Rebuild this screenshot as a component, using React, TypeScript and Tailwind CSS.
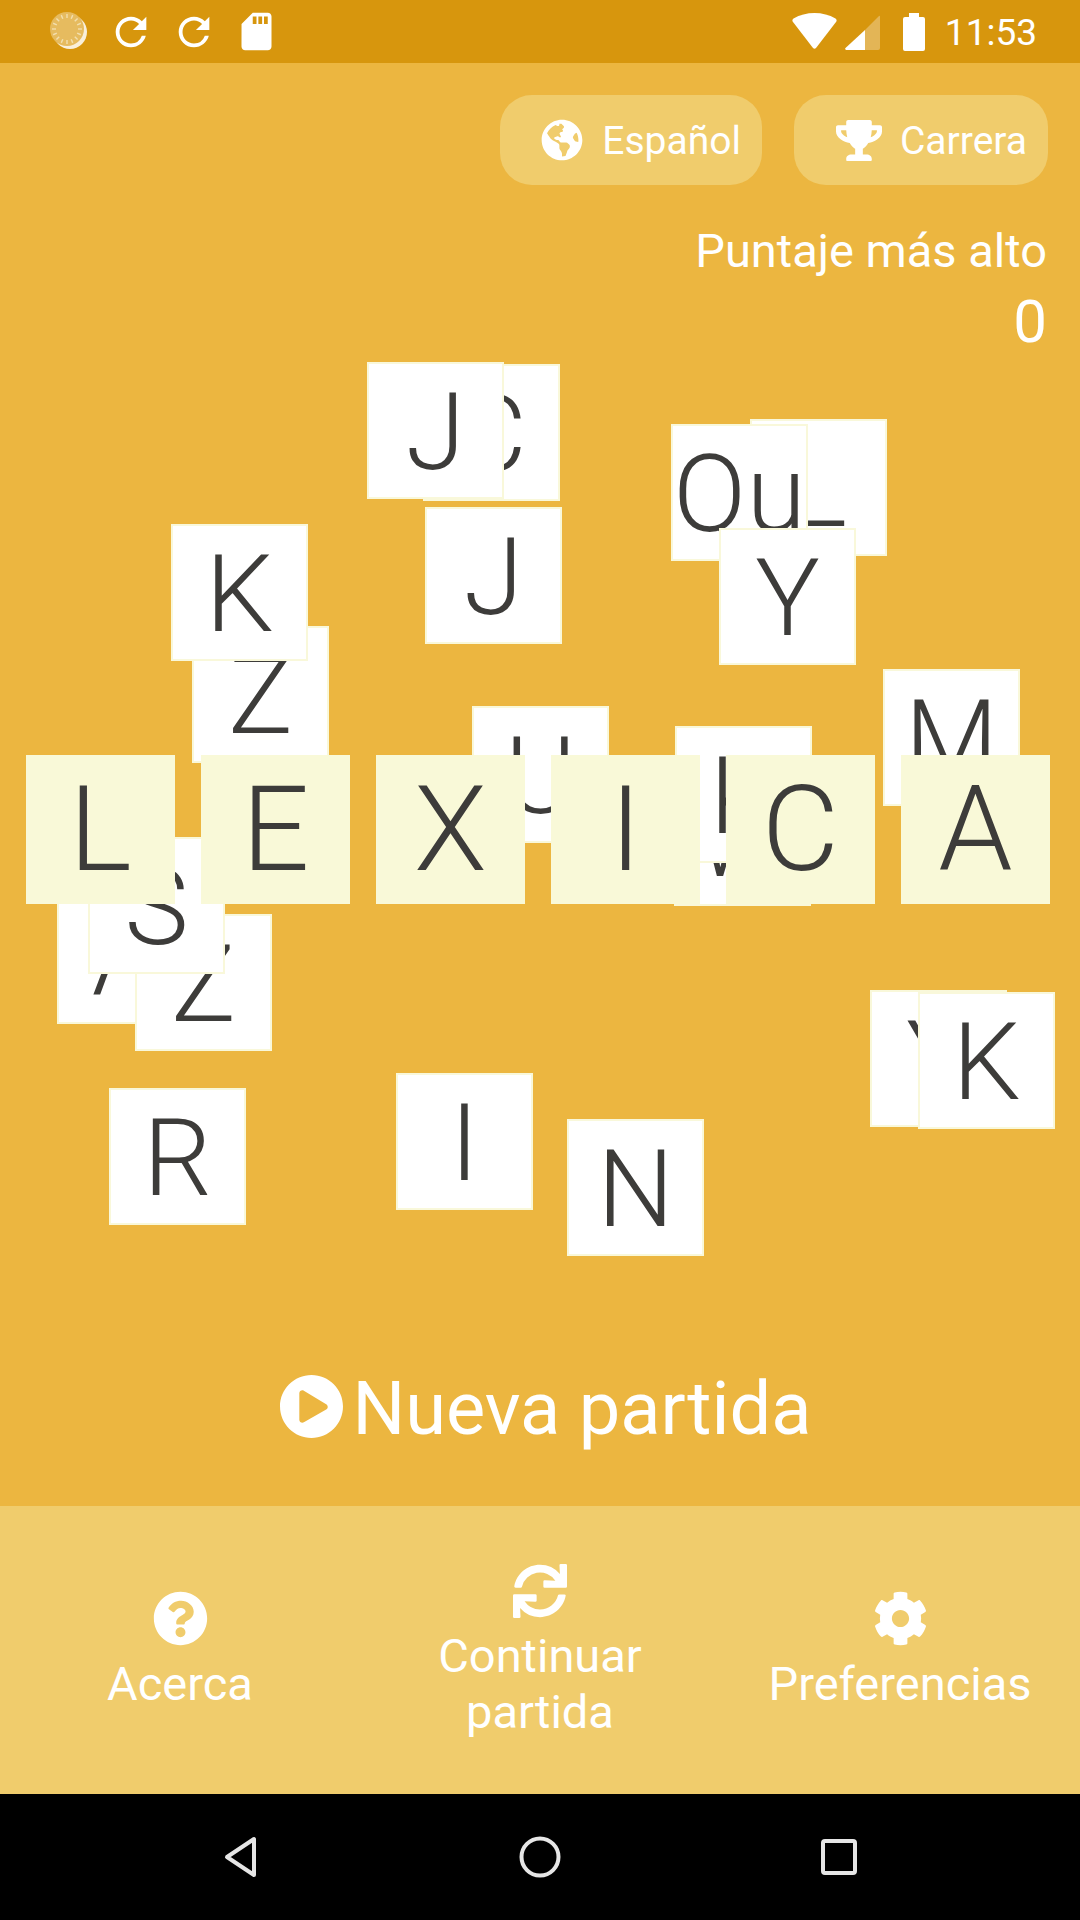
import { FaCog, FaGlobeAmericas, FaPlayCircle, FaQuestionCircle, FaSync, FaTrophy } from 'react-icons/fa';
import { MdRefresh, MdSdStorage } from 'react-icons/md';

// tiles on the board, back to front, x/y are page coordinates
const looseTiles = [
    { ch: 'C', x: 423, y: 364 },
    { ch: 'J', x: 367, y: 362 },
    { ch: 'J', x: 425, y: 507 },
    { ch: 'L', x: 750, y: 419 },
    { ch: 'Qu', x: 671, y: 424 },
    { ch: 'Y', x: 719, y: 528 },
    { ch: 'Z', x: 192, y: 626 },
    { ch: 'K', x: 171, y: 524 },
    { ch: 'U', x: 472, y: 706 },
    { ch: 'M', x: 883, y: 669 },
    { ch: 'W', x: 674, y: 769 },
    { ch: 'K', x: 675, y: 726 },
    { ch: 'A', x: 57, y: 887 },
    { ch: 'Z', x: 135, y: 914 },
    { ch: 'S', x: 88, y: 837 },
    { ch: 'R', x: 109, y: 1088 },
    { ch: 'I', x: 396, y: 1073 },
    { ch: 'N', x: 567, y: 1119 },
    { ch: 'Y', x: 870, y: 990 },
    { ch: 'K', x: 918, y: 992 },
];

const title = ['L', 'E', 'X', 'I', 'C', 'A'];

function Spinner() {
    const ticks = Array.from({ length: 16 }, (_, i) => (i * 360) / 16);
    return (
        <svg width="38" height="38" viewBox="0 0 38 38">
            <circle cx="20" cy="20" r="17" fill="#ffffff" opacity="0.85" />
            <circle cx="17" cy="17" r="17" fill="#e6bb5f" />
            {ticks.map((a) => (
                <line
                    key={a}
                    x1="17"
                    y1="2"
                    x2="17"
                    y2="6"
                    stroke="#f3dfae"
                    strokeWidth="1.4"
                    transform={`rotate(${a} 17 17)`}
                />
            ))}
        </svg>
    );
}

function StatusBar() {
    return (
        <div className="h-[63px] bg-[#d7960d] flex items-center text-white">
            <div className="ml-[50px] w-[38px] h-[38px] mt-[-1px]">
                <Spinner />
            </div>
            <MdRefresh className="ml-[20px] w-[46px] h-[46px]" />
            <MdRefresh className="ml-[17px] w-[46px] h-[46px]" />
            <MdSdStorage className="ml-[17px] w-[45px] h-[45px]" />
            <div className="ml-auto flex items-center">
                <svg width="45" height="36" viewBox="0 0 45 36" className="mt-[-1px]">
                    <path d="M21 35 L1 9 Q-0.5 7 1.5 5.5 Q11 0 22.5 0 Q34 0 43.5 5.5 Q45.5 7 44 9 L24 35 Q22.5 36.5 21 35Z" fill="#ffffff" />
                </svg>
                <svg width="35" height="35" viewBox="0 0 35 35" className="ml-[8px] mt-[1px]">
                    <path d="M20 15 L34 1 Q35 0 35 2 L35 33 Q35 35 33 35 L20 35Z" fill="#ffffff" opacity="0.3" />
                    <path d="M20 15 L20 35 L1 35 Q-0.5 34 0.5 33Z" fill="#ffffff" />
                </svg>
                <svg width="22" height="38" viewBox="0 0 22 38" className="ml-[23px]">
                    <path d="M6 0 H16 V4 H20 Q22 4 22 6 V36 Q22 38 20 38 H2 Q0 38 0 36 V6 Q0 4 2 4 H6Z" fill="#ffffff" />
                </svg>
                <span className="ml-[20px] mr-[43px] text-[37px] leading-none mt-[1px]">11:53</span>
            </div>
        </div>
    );
}

function Board() {
    return (
        <div className="relative h-[900px] overflow-visible">
            {looseTiles.map((t, i) => (
                <div
                    key={i}
                    className="absolute w-[137px] h-[137px] bg-white border-2 border-[#f9f8da] flex items-center justify-center pt-[2px] text-[108px] font-light text-[#3d3c3a]"
                    style={{ left: t.x, top: t.y - 360 }}
                >
                    {t.ch}
                </div>
            ))}
            {title.map((ch, i) => (
                <div
                    key={ch}
                    className="absolute w-[149px] h-[149px] bg-[#f9f9d8] flex items-center justify-center pt-[2px] text-[119px] font-light text-[#3d3c3a]"
                    style={{ left: 26 + i * 175, top: 755 - 360 }}
                >
                    {ch}
                </div>
            ))}
        </div>
    );
}

function BottomItem({ icon, label }: { icon: React.ReactNode; label: React.ReactNode }) {
    return (
        <div className="pt-[3px] flex flex-col items-center justify-center text-center text-white">
            {icon}
            <div className="mt-[10px] text-[47px] leading-[56px]">{label}</div>
        </div>
    );
}

export default function App() {
    return (
        <div className="w-[1080px] h-[1920px] flex flex-col bg-black font-[Roboto,sans-serif] overflow-hidden">
            <StatusBar />
            <div className="h-[1443px] bg-[#ecb640] flex flex-col">
                <div className="h-[297px]">
                    <div className="flex justify-end gap-[32px] pt-[32px] pr-[32px] text-white">
                        <button className="h-[90px] pl-[41px] pr-[21px] rounded-[32px] bg-[#f0cc6c] flex items-center gap-[19px] text-[39px]">
                            <FaGlobeAmericas className="w-[42px] h-[42px]" />
                            <span className="mt-[2px]">Español</span>
                        </button>
                        <button className="h-[90px] pl-[42px] pr-[21px] rounded-[32px] bg-[#f0cc6c] flex items-center gap-[18px] text-[39px]">
                            <FaTrophy className="w-[46px] h-[41px]" />
                            <span className="mt-[2px]">Carrera</span>
                        </button>
                    </div>
                    <div className="mt-[36px] pr-[33px] text-right text-white">
                        <div className="text-[47px] leading-[60px]">Puntaje más alto</div>
                        <div className="mt-[6px] text-[60px] leading-[70px]">0</div>
                    </div>
                </div>
                <Board />
                <div className="pt-[112px] pl-[11px] flex items-center justify-center text-white">
                    <FaPlayCircle className="w-[65px] h-[65px] mt-[-6px]" />
                    <span className="ml-[8px] text-[74px] leading-none">Nueva partida</span>
                </div>
            </div>
            <div className="h-[288px] bg-[#f0cc6c] grid grid-cols-3">
                <BottomItem icon={<FaQuestionCircle className="w-[55px] h-[55px]" />} label="Acerca" />
                <BottomItem
                    icon={<FaSync className="w-[54px] h-[54px]" />}
                    label={
                        <>
                            Continuar
                            <br />
                            partida
                        </>
                    }
                />
                <BottomItem icon={<FaCog className="w-[55px] h-[55px]" />} label="Preferencias" />
            </div>
            <div className="h-[126px] bg-black flex items-center justify-center gap-[257px]">
                <svg width="40" height="44" viewBox="0 0 40 44">
                    <path d="M33 4 V40 L6 22Z" fill="none" stroke="#e6e6e6" strokeWidth="4" strokeLinejoin="round" />
                </svg>
                <svg width="44" height="44" viewBox="0 0 44 44">
                    <circle cx="22" cy="22" r="18.5" fill="none" stroke="#e6e6e6" strokeWidth="4" />
                </svg>
                <svg width="40" height="40" viewBox="0 0 40 40">
                    <rect x="4" y="4" width="32" height="32" rx="2" fill="none" stroke="#e6e6e6" strokeWidth="4" />
                </svg>
            </div>
        </div>
    );
}
